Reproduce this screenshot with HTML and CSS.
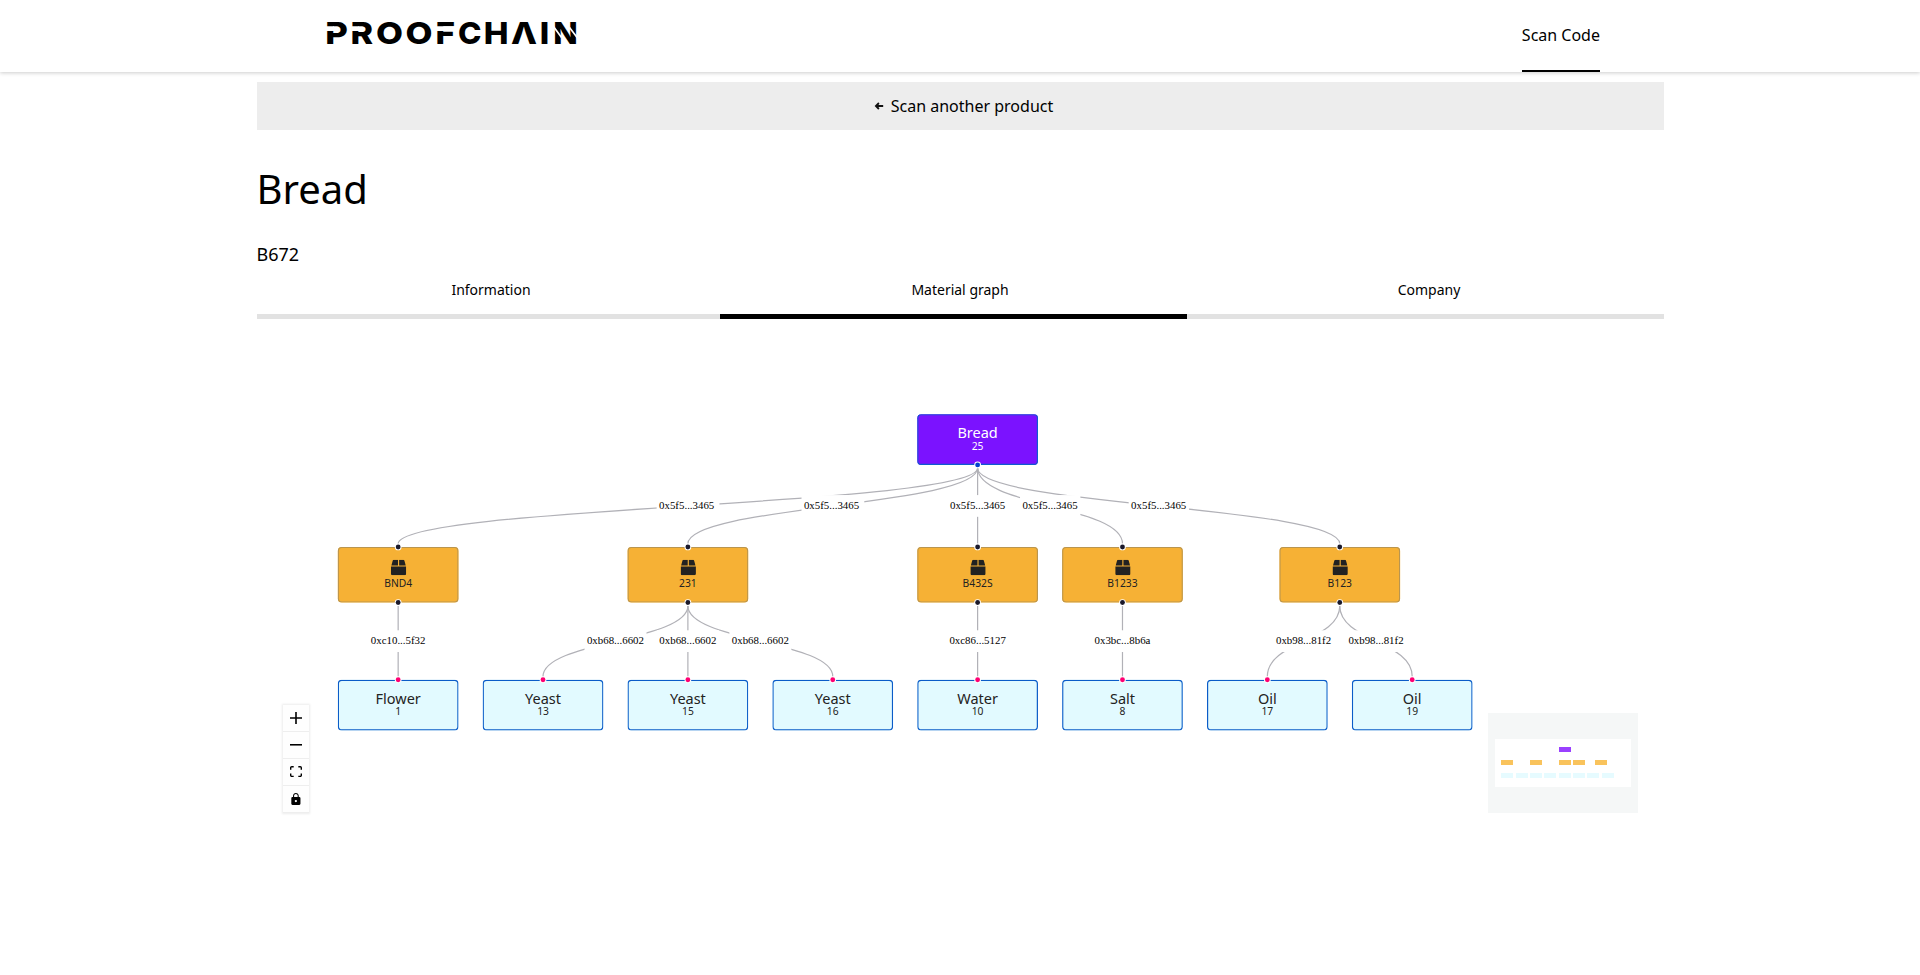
FILE: index.html
```html
<!DOCTYPE html>
<html lang="en">
<head>
<meta charset="utf-8">
<title>Proofchain</title>
<link rel="stylesheet" href="styles.css">
</head>
<body>
<header class="header">
  <svg class="logo" width="250" height="24" viewBox="0 0 250 24" role="img" aria-label="Proofchain">
    <g class="logo-text">
      <text x="-1.7" y="23" textLength="22.6" lengthAdjust="spacingAndGlyphs">P</text>
      <text x="23.6" y="23" textLength="22.6" lengthAdjust="spacingAndGlyphs">R</text>
      <text x="49" y="23" textLength="27" lengthAdjust="spacingAndGlyphs">O</text>
      <text x="78.5" y="23" textLength="27" lengthAdjust="spacingAndGlyphs">O</text>
      <text x="108.5" y="23" textLength="19.5" lengthAdjust="spacingAndGlyphs">F</text>
      <text x="131" y="23" textLength="23.5" lengthAdjust="spacingAndGlyphs">C</text>
      <text x="156.8" y="23" textLength="24.8" lengthAdjust="spacingAndGlyphs">H</text>
      <text x="184" y="23" textLength="26" lengthAdjust="spacingAndGlyphs">Λ</text>
      <text x="212.8" y="23" textLength="9.5" lengthAdjust="spacingAndGlyphs">I</text>
      <text x="226.3" y="23" textLength="24.5" lengthAdjust="spacingAndGlyphs">N</text>
    </g>
    <path class="logo-cut" d="M-1 5.3H7V10H-1ZM25 5.3H32V10H25ZM109 5.3H130V10H109Z"/>
    <path class="logo-slit" d="M226.5 5.5L234.5 16.5M242.5 6.5L250.5 17"/>
  </svg>
  <nav class="nav"><a class="nav-link">Scan Code</a></nav>
</header>
<main class="page">
  <button class="back">
    <svg width="16" height="16" viewBox="0 0 16 16"><path d="M12.2 8H5M7.9 5L4.9 8L7.9 11" fill="none" stroke="#111" stroke-width="1.8"/></svg>
    <span>Scan another product</span>
  </button>
  <h1 class="title">Bread</h1>
  <p class="code">B672</p>
  <div class="tabs"><span>Information</span><span>Material graph</span><span>Company</span></div>
  <div class="track"><div class="track-active"></div></div>
  <section class="flow">
    <div class="viewport">
      <svg class="edges" width="1410" height="400" viewBox="0 0 1410 400">
        <path d="M795 67C795 114 75 114 75 161"/>
        <path d="M795 67C795 114 435 114 435 161"/>
        <path d="M795 67V161"/>
        <path d="M795 67C795 114 975 114 975 161"/>
        <path d="M795 67C795 114 1245 114 1245 161"/>
        <path d="M75 238V326"/>
        <path d="M435 238C435 282 255 282 255 326"/>
        <path d="M435 238V326"/>
        <path d="M435 238C435 282 615 282 615 326"/>
        <path d="M795 238V326"/>
        <path d="M975 238V326"/>
        <path d="M1245 238C1245 282 1155 282 1155 326"/>
        <path d="M1245 238C1245 282 1335 282 1335 326"/>
      </svg>
      <span class="label wide" style="left:435px;top:114px">0x5f5...3465</span>
      <span class="label wide" style="left:615px;top:114px">0x5f5...3465</span>
      <span class="label" style="left:795px;top:114px">0x5f5...3465</span>
      <span class="label" style="left:885px;top:114px">0x5f5...3465</span>
      <span class="label" style="left:1020px;top:114px">0x5f5...3465</span>
      <span class="label" style="left:75px;top:282px">0xc10...5f32</span>
      <span class="label" style="left:345px;top:282px">0xb68...6602</span>
      <span class="label" style="left:435px;top:282px">0xb68...6602</span>
      <span class="label" style="left:525px;top:282px">0xb68...6602</span>
      <span class="label" style="left:795px;top:282px">0xc86...5127</span>
      <span class="label" style="left:975px;top:282px">0x3bc...8b6a</span>
      <span class="label" style="left:1200px;top:282px">0xb98...81f2</span>
      <span class="label" style="left:1290px;top:282px">0xb98...81f2</span>

      <div class="node product" style="left:720px;top:0"><b>Bread</b><small>25</small><i class="dot bottom"></i></div>

      <div class="node batch" style="left:0;top:165px"><i class="dot top"></i><svg class="box" viewBox="0 0 19 19"><use href="#box"/></svg><small>BND4</small><i class="dot bottom"></i></div>
      <div class="node batch" style="left:360px;top:165px"><i class="dot top"></i><svg class="box" viewBox="0 0 19 19"><use href="#box"/></svg><small>231</small><i class="dot bottom"></i></div>
      <div class="node batch" style="left:720px;top:165px"><i class="dot top"></i><svg class="box" viewBox="0 0 19 19"><use href="#box"/></svg><small>B432S</small><i class="dot bottom"></i></div>
      <div class="node batch" style="left:900px;top:165px"><i class="dot top"></i><svg class="box" viewBox="0 0 19 19"><use href="#box"/></svg><small>B1233</small><i class="dot bottom"></i></div>
      <div class="node batch" style="left:1170px;top:165px"><i class="dot top"></i><svg class="box" viewBox="0 0 19 19"><use href="#box"/></svg><small>B123</small><i class="dot bottom"></i></div>

      <div class="node leaf" style="left:0;top:330px"><i class="dot top"></i><b>Flower</b><small>1</small></div>
      <div class="node leaf" style="left:180px;top:330px"><i class="dot top"></i><b>Yeast</b><small>13</small></div>
      <div class="node leaf" style="left:360px;top:330px"><i class="dot top"></i><b>Yeast</b><small>15</small></div>
      <div class="node leaf" style="left:540px;top:330px"><i class="dot top"></i><b>Yeast</b><small>16</small></div>
      <div class="node leaf" style="left:720px;top:330px"><i class="dot top"></i><b>Water</b><small>10</small></div>
      <div class="node leaf" style="left:900px;top:330px"><i class="dot top"></i><b>Salt</b><small>8</small></div>
      <div class="node leaf" style="left:1080px;top:330px"><i class="dot top"></i><b>Oil</b><small>17</small></div>
      <div class="node leaf" style="left:1260px;top:330px"><i class="dot top"></i><b>Oil</b><small>19</small></div>
    </div>
    <div class="controls">
      <button><svg viewBox="0 0 32 32"><path d="M32 18.133H18.133V32h-4.266V18.133H0v-4.266h13.867V0h4.266v13.867H32z"/></svg></button>
      <button><svg viewBox="0 0 32 5"><path d="M0 0h32v4.2H0z"/></svg></button>
      <button><svg viewBox="0 0 32 30"><path d="M3.692 4.63c0-.53.4-.938.939-.938h5.215V0H4.708C2.13 0 0 2.054 0 4.63v5.216h3.692V4.631zM27.354 0h-5.2v3.692h5.17c.53 0 .984.4.984.939v5.215H32V4.631A4.624 4.624 0 0027.354 0zm.954 24.83c0 .532-.4.94-.939.94h-5.215v3.768h5.215c2.577 0 4.631-2.13 4.631-4.707v-5.139h-3.692v5.139zm-23.677.94c-.531 0-.939-.4-.939-.94v-5.138H0v5.139c0 2.577 2.13 4.707 4.708 4.707h5.138V25.77H4.631z"/></svg></button>
      <button><svg viewBox="0 0 25 32"><path d="M21.333 10.667H19.81V7.619C19.81 3.429 16.38 0 12.19 0 8 0 4.571 3.429 4.571 7.619v3.048H3.048A3.056 3.056 0 000 13.714v15.238A3.056 3.056 0 003.048 32h18.285a3.056 3.056 0 003.048-3.048V13.714a3.056 3.056 0 00-3.048-3.047zM12.19 24.533a3.056 3.056 0 01-3.047-3.047 3.056 3.056 0 013.047-3.048 3.056 3.056 0 013.048 3.048 3.056 3.056 0 01-3.048 3.047zm4.724-13.866H7.467V7.619c0-2.59 2.133-4.724 4.723-4.724 2.591 0 4.724 2.133 4.724 4.724v3.048z"/></svg></button>
    </div>
    <svg class="minimap" width="150" height="100" viewBox="0 0 150 100">
      <rect width="150" height="100" fill="#f5f7f7"/>
      <rect x="7" y="26" width="136" height="48" fill="#fff"/>
      <path fill="#9a40ff" d="M71 34h12v5H71z"/>
      <path fill="#f9c35c" d="M13 47h12v5H13zM42 47h12v5H42zM71 47h12v5H71zM85 47h12v5H85zM107 47h12v5h-12z"/>
      <path fill="#e6fbff" d="M13 60h12v5H13zM28 60h12v5H28zM42 60h12v5H42zM56 60h12v5H56zM71 60h12v5H71zM85 60h12v5H85zM99 60h12v5H99zM114 60h12v5h-12z"/>
    </svg>
  </section>
</main>
<svg width="0" height="0" class="defs">
  <symbol id="box" viewBox="0 0 19 19"><path d="M3.6 0H8.8V7H0.6L2.2 1.2Q2.6 0 3.6 0ZM10.2 0H15.4Q16.4 0 16.8 1.2L18.4 7H10.2ZM0 8.2H19V17.3Q19 19 17.3 19H1.7Q0 19 0 17.3Z"/></symbol>
</svg>
</body>
</html>
```

FILE: styles.css
```css
* { box-sizing: border-box; }
body {
  margin: 0;
  background: #fff;
  color: #000;
  font-family: "Noto Sans", sans-serif;
  font-size: 16px;
  overflow: hidden;
}
button { border: 0; padding: 0; font: inherit; color: inherit; }
.defs { display: block; }

.header {
  height: 72px;
  padding: 0 320px 0 327px;
  display: flex;
  justify-content: space-between;
  align-items: flex-start;
  box-shadow: 0 1px 4px rgba(0, 0, 0, .2);
}
.logo { margin-top: 21px; overflow: visible; }
.logo-text { font: 800 30.6px Inter, sans-serif; }
.logo-cut { fill: #fff; }
.logo-slit { fill: none; stroke: #fff; stroke-width: 1.7; }
.nav { height: 72px; display: flex; }
.nav-link { height: 72px; line-height: 70px; border-bottom: 2px solid #000; }

.page { width: 1407px; margin: 10px auto 0 256.5px; }
.back {
  width: 100%;
  height: 48px;
  padding-left: 4px;
  background: #ededed;
  display: flex;
  align-items: center;
  justify-content: center;
  gap: 4px;
}
.title { margin: 31px 0 0; font-size: 40px; font-weight: 400; line-height: 56px; }
.code { margin: 24px 0 0; font-size: 18px; line-height: 26px; }
.tabs {
  display: grid;
  grid-template-columns: repeat(3, 1fr);
  margin-top: 13px;
  height: 34px;
  font-size: 14px;
  line-height: 20px;
  text-align: center;
}
.track { height: 5px; background: #e2e2e2; }
.track-active { width: 467.2px; height: 5px; margin-left: 463.8px; background: #000; }

.flow {
  position: relative;
  height: 504px;
  padding: 0 26px 10px;
  display: flex;
  justify-content: space-between;
  align-items: flex-end;
}
.viewport {
  position: absolute;
  left: 0;
  top: 0;
  transform-origin: 0 0;
  transform: translate(80.8px, 95.2px) scale(.8048);
}
.edges { position: absolute; left: 0; top: 0; fill: none; stroke: #b1b1b7; stroke-width: 1.5; }
.label {
  position: absolute;
  transform: translate(-50%, -50%);
  padding: 0 3px;
  height: 27px;
  line-height: 25px;
  background: #fff;
  font-family: "Liberation Serif", serif;
  font-size: 13.5px;
  white-space: nowrap;
}
.label.wide { padding-right: 6px; }

.node {
  position: absolute;
  width: 150px;
  height: 63px;
  padding-top: 10px;
  border-radius: 5px;
  display: flex;
  flex-direction: column;
  align-items: center;
  color: #222;
}
.node b { font-weight: 400; font-size: 18px; line-height: 25px; }
.node small { font-size: 12.8px; line-height: 14px; margin-top: -3px; }
.product { background: #7b12ff; box-shadow: inset 0 0 0 1.4px #0f5bd0; color: #fff; }
.leaf { padding-top: 10.6px; background: #e2faff; box-shadow: inset 0 0 0 1.5px #0b5cc8; }
.node.leaf small { margin-top: -3.6px; }
.batch { height: 69px; padding-top: 16px; background: #f6b135; box-shadow: inset 0 0 0 1.4px #b9954f; }
.node.batch small { margin-top: 3px; }
.box { width: 19px; height: 19px; fill: #222; }
.dot {
  position: absolute;
  left: 50%;
  width: 6px;
  height: 6px;
  margin-left: -3px;
  border-radius: 50%;
  background: #1a192b;
  box-shadow: 0 0 0 1.2px #fff;
}
.dot.top { top: -3px; }
.dot.bottom { bottom: -3px; }
.leaf .dot { background: #ff0072; }
.product .dot { background: #0041d0; }

.controls { width: 26px; box-shadow: 0 0 2px 1px rgba(0, 0, 0, .08); }
.controls button {
  width: 26px;
  height: 27px;
  background: #fefefe;
  border-bottom: 1px solid #eee;
  display: flex;
  align-items: center;
  justify-content: center;
}
.controls svg { width: 12px; max-height: 12px; }
.minimap { display: block; }
```
